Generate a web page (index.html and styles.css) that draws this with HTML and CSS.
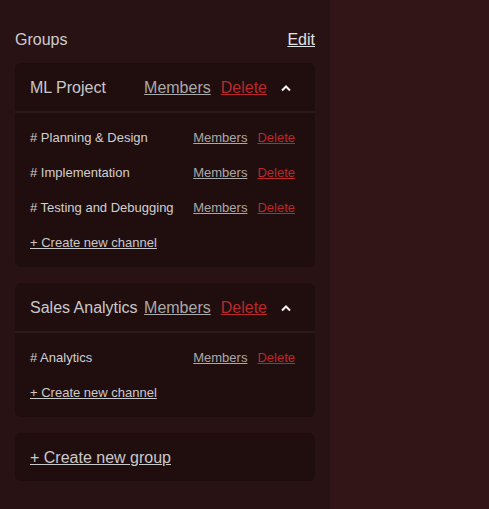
FILE: index.html
```html
<!DOCTYPE html>
<html lang="en">

<head>
    <meta charset="UTF-8">
    <meta name="viewport" content="width=device-width, initial-scale=1.0">
    <title>Groups</title>
    <link rel="stylesheet" href="styles.css">
</head>

<body>
    <div class="layout">
        <aside class="sidebar">
            <div class="sidebar-head">
                <span class="sidebar-title">Groups</span>
                <a href="#" class="edit-link">Edit</a>
            </div>

            <div class="group-card">
                <div class="group-head">
                    <span class="group-name">ML Project</span>
                    <a href="#" class="members-link">Members</a>
                    <a href="#" class="delete-link">Delete</a>
                    <svg class="chevron" width="12" height="8" viewBox="0 0 12 8">
                        <path d="M2 6.5 L6 2.5 L10 6.5" fill="none" stroke="#f2f2f2" stroke-width="2" />
                    </svg>
                </div>
                <div class="channel-list">
                    <div class="channel-row">
                        <span class="channel-name"># Planning &amp; Design</span>
                        <a href="#" class="members-link">Members</a>
                        <a href="#" class="delete-link">Delete</a>
                    </div>
                    <div class="channel-row">
                        <span class="channel-name"># Implementation</span>
                        <a href="#" class="members-link">Members</a>
                        <a href="#" class="delete-link">Delete</a>
                    </div>
                    <div class="channel-row">
                        <span class="channel-name"># Testing and Debugging</span>
                        <a href="#" class="members-link">Members</a>
                        <a href="#" class="delete-link">Delete</a>
                    </div>
                    <div class="channel-row">
                        <a href="#" class="create-link">+ Create new channel</a>
                    </div>
                </div>
            </div>

            <div class="group-card">
                <div class="group-head">
                    <span class="group-name">Sales Analytics</span>
                    <a href="#" class="members-link">Members</a>
                    <a href="#" class="delete-link">Delete</a>
                    <svg class="chevron" width="12" height="8" viewBox="0 0 12 8">
                        <path d="M2 6.5 L6 2.5 L10 6.5" fill="none" stroke="#f2f2f2" stroke-width="2" />
                    </svg>
                </div>
                <div class="channel-list">
                    <div class="channel-row">
                        <span class="channel-name"># Analytics</span>
                        <a href="#" class="members-link">Members</a>
                        <a href="#" class="delete-link">Delete</a>
                    </div>
                    <div class="channel-row">
                        <a href="#" class="create-link">+ Create new channel</a>
                    </div>
                </div>
            </div>

            <div class="group-card new-group">
                <a href="#" class="create-link">+ Create new group</a>
            </div>
        </aside>
        <main class="content"></main>
    </div>
</body>

</html>
```

FILE: styles.css
```css
body {
    font-family: "Liberation Sans", Arial, sans-serif;
    background-color: #321617;
    margin: 0;
    padding: 0;
}

.layout {
    display: flex;
    height: 509px;
}

.sidebar {
    width: 330px;
    box-sizing: border-box;
    background-color: #291213;
    padding: 31px 15px;
    display: flex;
    flex-direction: column;
    gap: 16px;
}

.content {
    flex: 1;
}

.sidebar-head {
    display: flex;
    justify-content: space-between;
    align-items: center;
    height: 20px;
    font-size: 16px;
    margin-bottom: -2px;
}

.sidebar-title {
    color: #cdcdcd;
}

.edit-link {
    color: #e2e2e2;
}

.group-card {
    background-color: #200e0f;
    border-radius: 6px;
}

.group-head {
    display: flex;
    align-items: center;
    padding: 16px 15px 14px 15px;
    line-height: 18px;
    font-size: 16px;
    border-bottom: 2px solid #2d1819;
}

.group-name {
    flex: 1;
    min-width: 0;
    color: #c9c9c9;
    white-space: nowrap;
    margin-right: 7px;
}

.group-head .delete-link {
    margin-left: 10px;
}

.chevron {
    flex-shrink: 0;
    margin: 0 8px 0 13px;
}

.members-link {
    color: #a9a9a9;
}

.delete-link {
    color: #b8292c;
}

.channel-list {
    padding: 7px 15px 7px 15px;
}

.channel-row {
    display: flex;
    align-items: center;
    gap: 10px;
    height: 35px;
    font-size: 13px;
}

.channel-name {
    flex: 1;
    color: #d0d0d0;
}

.channel-row .delete-link {
    margin-right: 5px;
}

.create-link {
    color: #c9c9c9;
}

.new-group {
    padding: 15px 15px 14px 15px;
    font-size: 16px;
    line-height: 19px;
}
```
